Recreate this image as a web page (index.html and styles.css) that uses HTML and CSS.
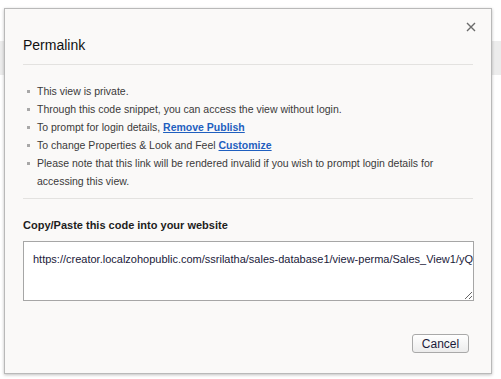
FILE: index.html
```html
<!DOCTYPE html>
<html>
<head>
<meta charset="utf-8">
<link rel="stylesheet" href="styles.css">
</head>
<body>
<div class="dialog">
  <button class="close" aria-label="Close">
    <svg width="10" height="10" viewBox="0 0 10 10"><path d="M1 1L9 9M9 1L1 9" stroke="#6b6b6b" stroke-width="1.4" fill="none"/></svg>
  </button>
  <h1 class="title">Permalink</h1>
  <ul class="notes">
    <li>This view is private.</li>
    <li>Through this code snippet, you can access the view without login.</li>
    <li>To prompt for login details, <a href="#" class="link">Remove Publish</a></li>
    <li>To change Properties &amp; Look and Feel <a href="#" class="link">Customize</a></li>
    <li>Please note that this link will be rendered invalid if you wish to prompt login details for accessing this view.</li>
  </ul>
  <div class="code-section">
    <div class="label">Copy/Paste this code into your website</div>
    <textarea class="code" wrap="off">https://creator.localzohopublic.com/ssrilatha/sales-database1/view-perma/Sales_View1/yQ5dBsE0tKmVbZ</textarea>
  </div>
  <div class="actions">
    <button class="cancel">Cancel</button>
  </div>
</div>
</body>
</html>
```
FILE: styles.css
```css
html, body {
  margin: 0;
  padding: 0;
}
body {
  width: 501px;
  height: 379px;
  overflow: hidden;
  font-family: "Liberation Sans", Arial, sans-serif;
  background: linear-gradient(to bottom, #ffffff 0, #ffffff 41px, #ececec 41px, #ececec 75px, #ffffff 75px);
}
.dialog {
  position: relative;
  box-sizing: border-box;
  margin: 8px 0 0 4px;
  width: 488px;
  height: 366px;
  background: #faf9f8;
  border: 1px solid #b9b9b9;
  box-shadow: 0 1px 3px rgba(0,0,0,0.25);
  padding: 0 18px 0 18px;
}
.close {
  position: absolute;
  top: 12px;
  right: 14px;
  width: 12px;
  height: 12px;
  padding: 0;
  border: 0;
  background: none;
  display: flex;
  align-items: center;
  justify-content: center;
}
.title {
  margin: 0;
  padding: 28px 0 11px;
  font-size: 14px;
  font-weight: normal;
  line-height: 16px;
  color: #111;
  border-bottom: 1px solid #e3e2e0;
}
.notes {
  margin: 0;
  padding: 17px 0 8px 0;
  list-style: none;
  border-bottom: 1px solid #e3e2e0;
}
.notes li {
  position: relative;
  padding-left: 14px;
  font-size: 10.5px;
  line-height: 18px;
  color: #3a3a3a;
}
.notes li::before {
  content: "";
  position: absolute;
  left: 4px;
  top: 8px;
  width: 3px;
  height: 3px;
  background: #a8a8a8;
}
.link {
  color: #1f5fbf;
  font-weight: bold;
  text-decoration: underline;
}
.code-section {
  padding-top: 19px;
}
.label {
  font-size: 11px;
  font-weight: bold;
  line-height: 14px;
  color: #1d1d1d;
  margin-bottom: 9px;
}
.code {
  display: block;
  box-sizing: border-box;
  width: 451px;
  height: 60px;
  margin: 0;
  padding: 10px 9px;
  border: 1px solid #a6a6a6;
  background: #fff;
  font-family: "Liberation Sans", Arial, sans-serif;
  font-size: 11px;
  line-height: 14px;
  color: #1a1a3a;
  overflow: hidden;
  resize: both;
}
.actions {
  display: flex;
  justify-content: flex-end;
  padding-top: 33px;
  padding-right: 4px;
}
.cancel {
  box-sizing: border-box;
  width: 57px;
  height: 19px;
  padding: 0;
  border: 1px solid #a9a9a9;
  border-radius: 3px;
  background: linear-gradient(to bottom, #ffffff, #ececec);
  font-family: "Liberation Sans", Arial, sans-serif;
  font-size: 12px;
  color: #1a1a3a;
}
```
